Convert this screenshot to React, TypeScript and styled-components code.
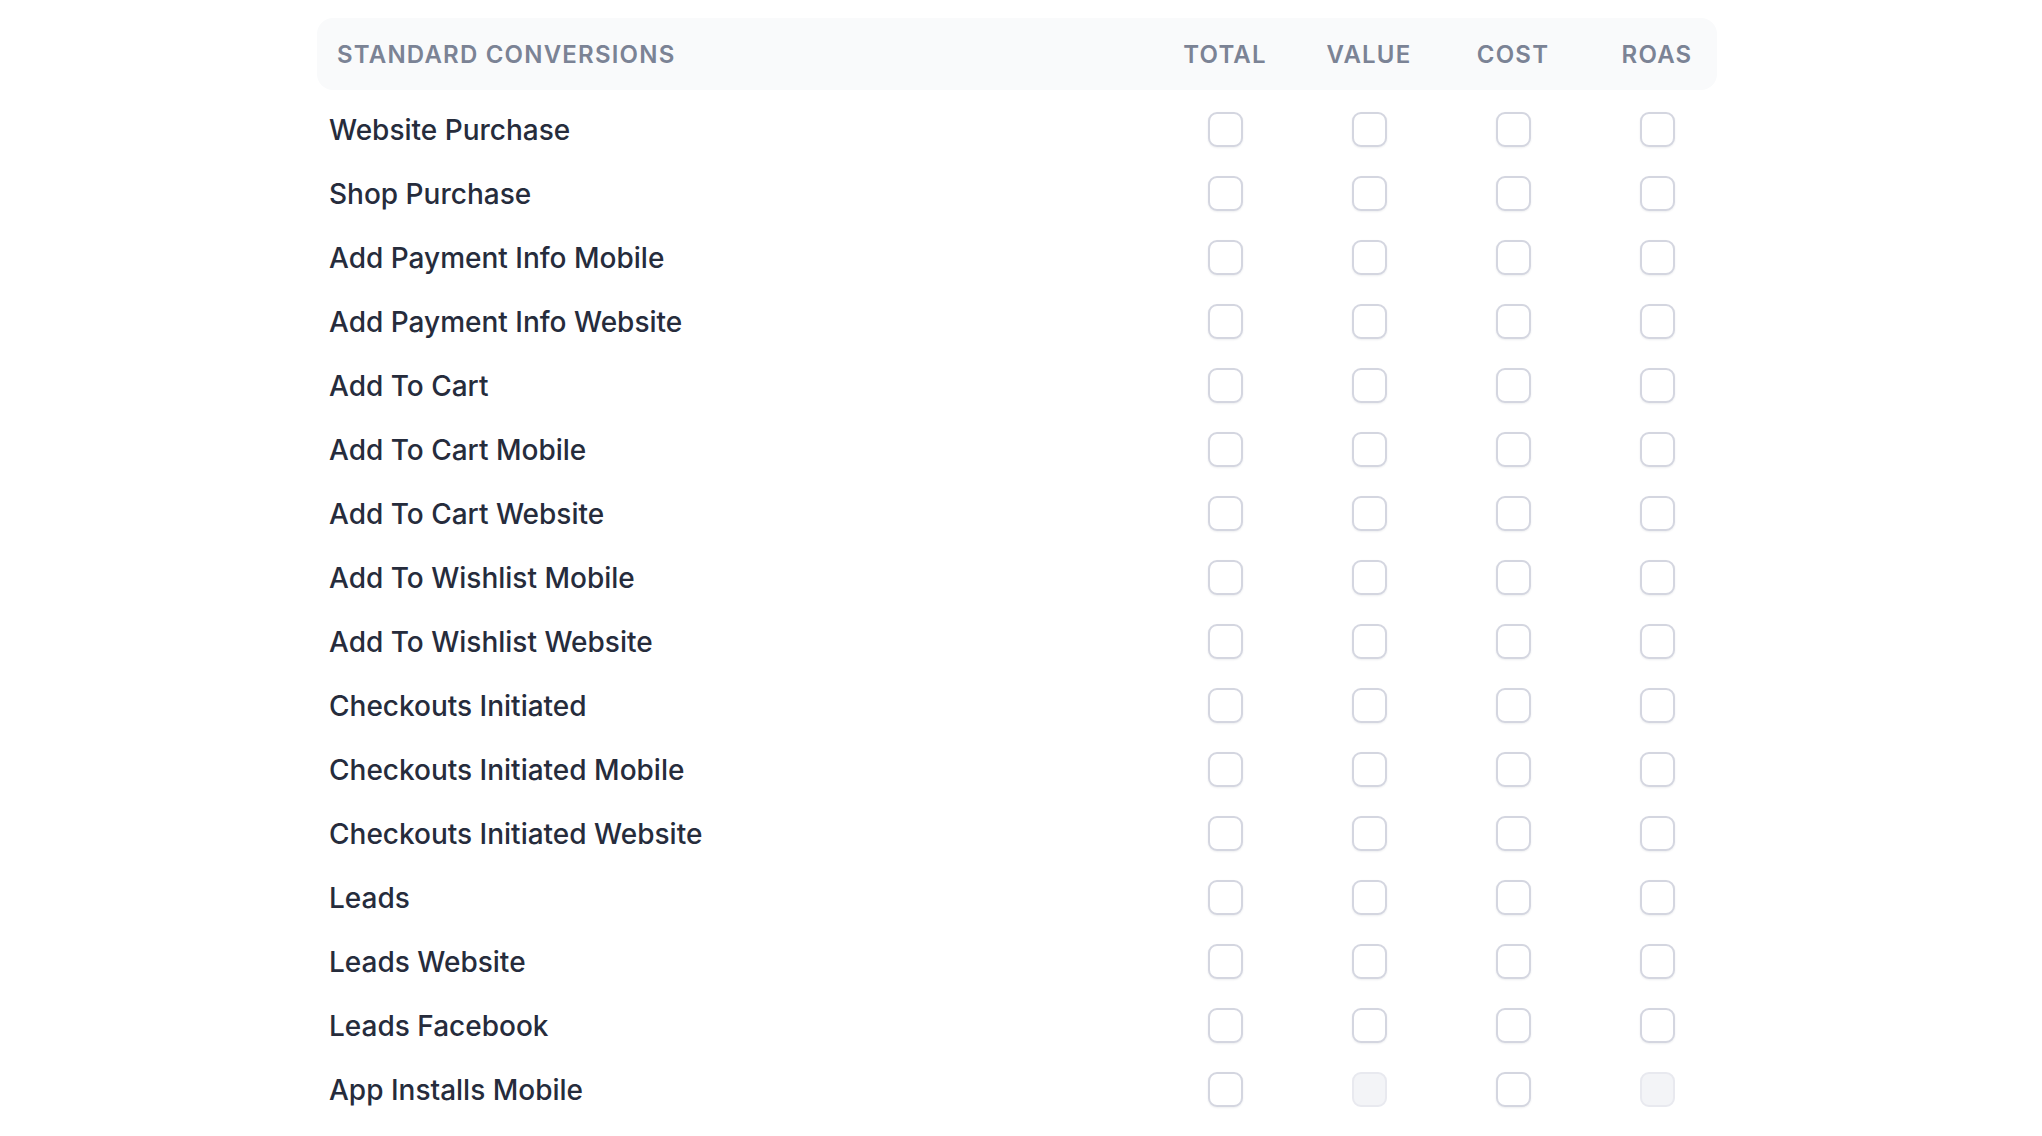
import React from "react";
import styled, { createGlobalStyle } from "styled-components";

const GlobalStyle = createGlobalStyle`
  html, body {
    margin: 0;
    padding: 0;
    background: #ffffff;
    font-family: Inter, "Noto Sans", "Liberation Sans", sans-serif;
  }
`;

const Page = styled.div`
  width: 1400px;
  margin: 18px 0 0 317px;
`;

const Grid = styled.div`
  display: grid;
  grid-template-columns: 1fr repeat(4, 100px);
  column-gap: 44px;
  align-items: center;
`;

const HeaderRow = styled(Grid)`
  height: 72px;
  padding: 0 10px 0 20px;
  background: #f9fafb;
  border-radius: 16px;
  margin-bottom: 7.5px;
`;

const HeadCell = styled.div<{ $center?: boolean }>`
  font-size: 24px;
  font-weight: 600;
  letter-spacing: 0.05em;
  text-transform: uppercase;
  color: #7b8395;
  text-align: ${(p) => (p.$center ? "center" : "left")};
`;

const Row = styled(Grid)`
  height: 64px;
  padding: 0 10px 0 12px;
`;

const Label = styled.div`
  font-size: 28px;
  font-weight: 500;
  color: #262c3c;
`;

const Cell = styled.div`
  display: flex;
  justify-content: center;
`;

const Box = styled.input.attrs({ type: "checkbox" })`
  appearance: none;
  margin: 0;
  width: 35px;
  height: 35px;
  box-sizing: border-box;
  border: 2px solid #d4d6e0;
  border-radius: 9px;
  background: #ffffff;
  box-shadow: 0 1px 2px rgba(30, 40, 70, 0.08);

  &:disabled {
    background: #f3f4f7;
    border-color: #e8e9ef;
    box-shadow: none;
  }
`;

const columns = ["Total", "Value", "Cost", "ROAS"];

const rows: { name: string; disabled?: number[] }[] = [
  { name: "Website Purchase" },
  { name: "Shop Purchase" },
  { name: "Add Payment Info Mobile" },
  { name: "Add Payment Info Website" },
  { name: "Add To Cart" },
  { name: "Add To Cart Mobile" },
  { name: "Add To Cart Website" },
  { name: "Add To Wishlist Mobile" },
  { name: "Add To Wishlist Website" },
  { name: "Checkouts Initiated" },
  { name: "Checkouts Initiated Mobile" },
  { name: "Checkouts Initiated Website" },
  { name: "Leads" },
  { name: "Leads Website" },
  { name: "Leads Facebook" },
  { name: "App Installs Mobile", disabled: [1, 3] },
];

export default function App() {
  return (
    <>
      <GlobalStyle />
      <Page>
        <HeaderRow>
          <HeadCell>Standard Conversions</HeadCell>
          {columns.map((c) => (
            <HeadCell key={c} $center>
              {c}
            </HeadCell>
          ))}
        </HeaderRow>
        {rows.map((r) => (
          <Row key={r.name}>
            <Label>{r.name}</Label>
            {columns.map((c, i) => (
              <Cell key={c}>
                <Box disabled={r.disabled?.includes(i)} />
              </Cell>
            ))}
          </Row>
        ))}
      </Page>
    </>
  );
}
